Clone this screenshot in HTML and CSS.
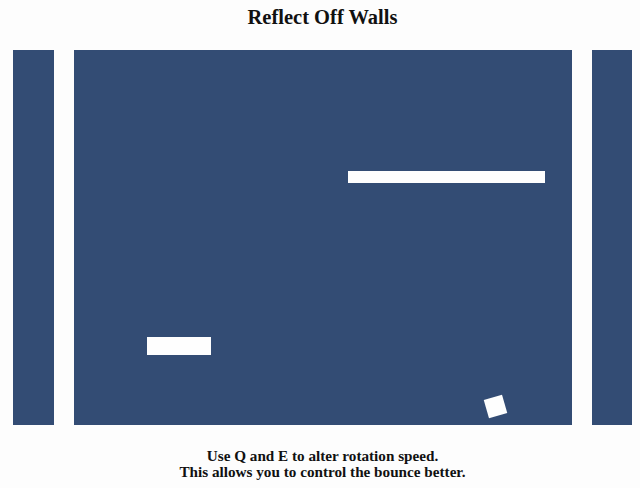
FILE: index.html
```html
<!DOCTYPE html>
<html>
<head>
<meta charset="utf-8">
<link rel="stylesheet" href="styles.css">
</head>
<body>
<div class="page">
  <h1 class="title">Reflect Off Walls</h1>
  <div class="stage">
    <div class="wall wall-left"></div>
    <div class="arena">
      <div class="paddle paddle-long"></div>
      <div class="paddle paddle-short"></div>
      <div class="ball"></div>
    </div>
    <div class="wall wall-right"></div>
  </div>
  <p class="hint">Use Q and E to alter rotation speed.<br>This allows you to control the bounce better.</p>
</div>
</body>
</html>
```
FILE: styles.css
```css
html, body {
  margin: 0;
  padding: 0;
  background: #fdfdfd;
}
body {
  font-family: "Liberation Serif", "Times New Roman", serif;
  color: #111;
}
.page {
  width: 619px;
  padding-left: 13px;
}
.title {
  margin: 0;
  padding: 6px 0 21px;
  font-size: 20.5px;
  line-height: 23px;
  font-weight: bold;
  text-align: center;
}
.stage {
  display: flex;
  gap: 20px;
  height: 375px;
}
.wall {
  background: #334c74;
}
.wall-left { width: 41px; }
.wall-right { width: 40px; }
.arena {
  position: relative;
  width: 498px;
  background: #334c74;
}
.paddle, .ball {
  position: absolute;
  background: #fefefe;
}
.paddle-long {
  left: 274px;
  top: 121px;
  width: 197px;
  height: 12px;
}
.paddle-short {
  left: 73px;
  top: 287px;
  width: 64px;
  height: 18px;
}
.ball {
  left: 411.5px;
  top: 346.5px;
  width: 19px;
  height: 19px;
  transform: rotate(-16deg);
}
.hint {
  margin: 23px 0 0;
  font-size: 15.2px;
  line-height: 16px;
  font-weight: bold;
  text-align: center;
}
```
